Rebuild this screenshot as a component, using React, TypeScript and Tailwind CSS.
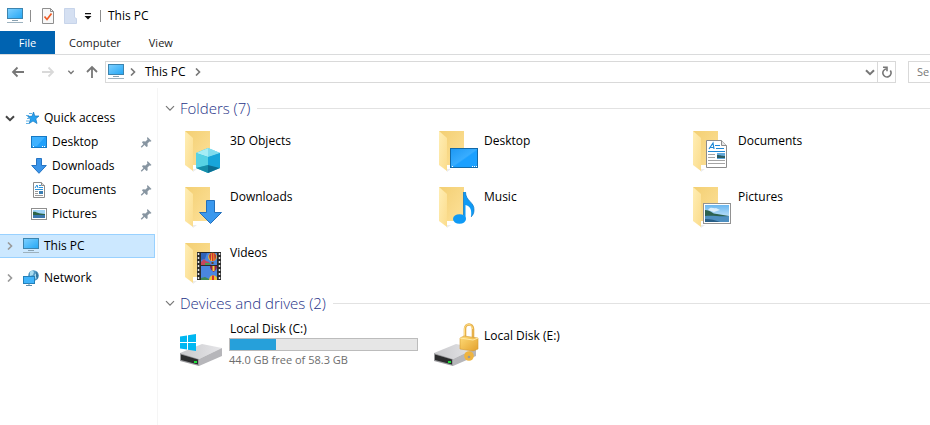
import React from 'react';

type IconProps = { className?: string };

const MonitorIcon: React.FC<IconProps> = ({ className = 'h-4 w-4' }) => (
  <svg viewBox="0 0 16 16" className={className} aria-hidden="true">
    <defs>
      <linearGradient id="screen" x1="0" y1="0" x2="1" y2="1">
        <stop offset="0" stopColor="#7fd0ff" />
        <stop offset="1" stopColor="#23a7f5" />
      </linearGradient>
    </defs>
    <rect x="0.5" y="0.5" width="15" height="10" fill="url(#screen)" stroke="#3d84ae" />
    <rect x="5" y="12" width="6" height="1" fill="#8aa2b1" />
    <rect x="0" y="14" width="16" height="1" fill="#9db2bf" />
  </svg>
);

const ChevronRight: React.FC<IconProps & { color?: string }> = ({ className = 'h-2 w-2', color = '#8a8a8a' }) => (
  <svg viewBox="0 0 8 8" className={className} fill="none" stroke={color} strokeWidth="1.6" aria-hidden="true">
    <path d="M2 0.5 5.5 4 2 7.5" />
  </svg>
);

const ChevronDown: React.FC<IconProps & { color?: string; weight?: number }> = ({
  className = 'h-3 w-3',
  color = '#444',
  weight = 2,
}) => (
  <svg viewBox="0 0 12 12" className={className} fill="none" stroke={color} strokeWidth={weight} aria-hidden="true">
    <path d="M2 4.200 6 8.200 10 4.200" />
  </svg>
);

const ArrowIcon: React.FC<IconProps & { color: string; d: string }> = ({ className = 'h-4 w-4', color, d }) => (
  <svg viewBox="0 0 16 16" className={className} fill="none" stroke={color} strokeWidth="1.8" aria-hidden="true">
    <path d={d} />
  </svg>
);

const StarIcon = () => (
  <svg viewBox="0 0 16 16" className="h-4 w-4" aria-hidden="true">
    <path d="M9.5 2 10.800 6h4.200l-3.200 2.800L13 13.500 9 11 5.200 13.500 6.400 9 3.600 6.300H8z" fill="#27a1f0" stroke="#1678c0" strokeWidth="0.7" />
    <path d="M5 3.5h3M2 5.500h3M3 8.5h2.500M2 11h3M2 13.500h3" stroke="#63b3e6" />
  </svg>
);

const SmallDesktopIcon = () => (
  <svg viewBox="0 0 16 16" className="h-4 w-4" aria-hidden="true">
    <rect x="0.5" y="2.5" width="15" height="11" fill="#20a0fb" stroke="#1679c4" />
    <path d="M6 12 14 3H1v9z" fill="#3fb2ff" />
    <path d="M2 12.5h1M11 12.5h1M13 12.5h1" stroke="#fff" />
  </svg>
);

const SmallDownloadIcon = () => (
  <svg viewBox="0 0 16 16" className="h-4 w-4" aria-hidden="true">
    <path d="M5.5 0.5h5v7h4.8L8 15.3.7 7.5h4.8z" fill="#3b95ea" stroke="#2674c3" />
  </svg>
);

const SmallDocumentIcon = () => (
  <svg viewBox="0 0 16 16" className="h-4 w-4" aria-hidden="true">
    <path d="M2.5.5h8l3 3v12h-11z" fill="#fff" stroke="#8b8b8b" />
    <path d="M10.5.5v3h3" fill="#ddd" stroke="#8b8b8b" />
    <path d="m4 6 2-3 1 3M8 3.5h2M8 5.5h4M4 7.5h8" fill="none" stroke="#2a93dd" />
    <path d="M4 9.5h3M4 11.5h3M4 13.5h8" stroke="#999" />
    <path d="M8 9h4v3H8z" fill="#3c7fb3" />
  </svg>
);

const SmallPictureIcon = () => (
  <svg viewBox="0 0 16 16" className="h-4 w-4" aria-hidden="true">
    <rect x="0.5" y="2.5" width="15" height="11" fill="#fff" stroke="#8f8f8f" />
    <path d="M2 4h12v8H2z" fill="#9fd3f7" />
    <path d="M2 6c3-1 4 2 12 2v2H2z" fill="#2d6448" />
    <path d="M2 9h12v3H2z" fill="#3a76ad" />
  </svg>
);

const NetworkIcon = () => (
  <svg viewBox="0 0 16 16" className="h-4 w-4" aria-hidden="true">
    <circle cx="10.5" cy="5.5" r="5.3" fill="#5199c4" />
    <path d="M7 2c2-2 3-1 4 0l-1 3-3 1zM12 4l3-1 .5 4-3 2-1-3z" fill="#a9dcf0" />
    <path d="M13 1.500a5.300 5.300 0 0 1 1 8l-1-3z" fill="#35759f" />
    <rect x="0.5" y="6.500" width="11" height="7" fill="#41b4fa" stroke="#2380b9" />
    <path d="M6 13.500v1.500M3 15.500h6" stroke="#5c8cab" />
  </svg>
);

const PinIcon = () => (
  <svg viewBox="0 0 12 12" className="h-3 w-3" aria-hidden="true">
    <path d="m7.500 1 4 4-1.200.8-.8-.3-2 2 .2 2.700-1.200.8L2 6.500l.8-1.200 2.700.2 2-2-.500-1.300z" fill="#8795a1" />
    <path d="M4.500 8 1.200 11.200" stroke="#8795a1" strokeWidth="1.300" />
  </svg>
);

// Open folder that every library icon sits on
const Folder: React.FC<{ children: React.ReactNode }> = ({ children }) => (
  <svg viewBox="0 0 48 48" className="h-12 w-12 shrink-0" aria-hidden="true">
    <defs>
      <linearGradient id="folderBack" x1="0" y1="0" x2="1" y2="1">
        <stop offset="0" stopColor="#f3cf73" />
        <stop offset="1" stopColor="#fde199" />
      </linearGradient>
      <linearGradient id="folderFlap" x1="0" y1="0" x2="1" y2="1">
        <stop offset="0" stopColor="#ffeeb5" />
        <stop offset="1" stopColor="#fbdc8c" />
      </linearGradient>
      <linearGradient id="blue" x1="0" y1="0" x2="1" y2="1">
        <stop offset="0" stopColor="#1c97f3" />
        <stop offset="0.5" stopColor="#38adff" />
        <stop offset="0.55" stopColor="#1ba0ff" />
        <stop offset="1" stopColor="#1ba0ff" />
      </linearGradient>
      <linearGradient id="sky" x1="0" y1="0" x2="0" y2="1">
        <stop offset="0" stopColor="#6bb7f0" />
        <stop offset="1" stopColor="#dff2fb" />
      </linearGradient>
    </defs>
    <path d="M12 43h5l-4 3z" fill="#ececec" />
    <path d="M5 5h25v34H12z" fill="url(#folderBack)" />
    <path d="M5 5l8 7v33l-8-6z" fill="url(#folderFlap)" />
    {children}
  </svg>
);

const CubeIcon = () => (
  <Folder>
    <path d="m16 27 12-5 12 5v15l-12 5-12-5z" fill="#2bb9d8" />
    <path d="m16 27 12-5 12 5-12 4z" fill="#a5edf5" />
    <path d="m28 22 12 5-12 4z" fill="#7fdcee" />
    <path d="m16 27 12 4v8l-12 3z" fill="#57d2e4" />
    <path d="m16 42 12-3v8z" fill="#168da8" />
    <path d="m28 31 12-4v15l-12-3z" fill="#17a5da" />
    <path d="m28 39 12 3-12 5z" fill="#0b6e93" />
  </Folder>
);

const DesktopIcon = () => (
  <Folder>
    <rect x="16.500" y="22.500" width="27" height="19" fill="url(#blue)" stroke="#1269a8" />
    <path d="M18 40.500h1M38 40.500h1M40 40.500h1M42 40.500h1" stroke="#fff" />
  </Folder>
);

const DocumentsIcon = () => (
  <Folder>
    <path d="M18.500 14.500h15l5 5v22h-20z" fill="#fff" stroke="#8c8c8c" />
    <path d="M33.500 14.500v5h5" fill="#e5e5e5" stroke="#8c8c8c" />
    <path d="m21 23 4-6 1 6M22 21.500h4M27 19.500h5M28 22.500h8M20 25.500h17" fill="none" stroke="#1e88d6" strokeWidth="1.200" />
    <path d="M20 28.500h7M20 31.500h7M20 34.500h17M20 37.500h17" stroke="#a5a5a5" />
    <path d="M29 27h8v6h-8z" fill="#64a9db" />
    <path d="M29 29c4 0 4 1 8 1v2h-8z" fill="#2c5d63" />
  </Folder>
);

const DownloadsIcon = () => (
  <Folder>
    <path d="M26.500 18.500h8v12h7L30.500 41.500 19.500 30.500h7z" fill="#3a98ee" stroke="#2470bb" />
  </Folder>
);

const MusicIcon = () => (
  <Folder>
    <ellipse cx="25.500" cy="37" rx="6.500" ry="4.800" fill="#0f9af5" />
    <path d="M29.500 10h2c0 9 9 10 8.500 18 0 3-1 5-3 7 1-8-1-11-5.500-12V37h-2z" fill="#0f9af5" />
    <path d="M31.500 10c0 9 9 10 8.500 18 0 3-1 5-3 7M29.500 10v23" fill="none" stroke="#0873c2" strokeWidth="0.7" />
  </Folder>
);

const PicturesIcon = () => (
  <Folder>
    <rect x="15.500" y="21.500" width="27" height="20" fill="#fff" stroke="#929292" />
    <path d="M17 23h24v17H17z" fill="url(#sky)" />
    <path d="M20 28c3-4 5-1 8-2l4 2-6 2z" fill="#fff" opacity="0.7" />
    <path d="M17 28c6 0 7 4 12 4l12 2v2H17z" fill="#2d6250" />
    <path d="M17 34c8-1 14 1 24 0v6H17z" fill="#4e8fc0" />
    <path d="M17 40v-3c6 0 10 1 15 3z" fill="#285e86" />
  </Folder>
);

const VideosIcon = () => (
  <Folder>
    <path d="M17 14h24v28H17z" fill="#2b2b2b" />
    <path d="M18.500 15v27M39.500 15v27" stroke="#e8e8e8" strokeWidth="1.500" strokeDasharray="2 2" />
    <path d="M21 15h16v12H21zM21 28h16v14H21z" fill="#4a86de" />
    <path d="M21 15h6l-2 6-4 1z" fill="#2f63b8" />
    <path d="M21 24l3-3 2 2 3 1 2 3H21z" fill="#c4475c" />
    <path d="M25 25h5v2h-5z" fill="#4a9a58" />
    <circle cx="32.500" cy="19" r="4.300" fill="#f0c12d" />
    <path d="M32 15h1.500v8H32z" fill="#d9302e" />
    <path d="M29 17.500c1-2 2-2.500 2.500-2.500l-.5 8c-1-1-2-3-2-5.500zM36 17.500c-.5-1.500-1.500-2.500-2-2.500l.5 8c1-1 1.700-3 1.500-5.500z" fill="#b53a3a" />
    <path d="M31.500 24h2v2h-2z" fill="#6d3d1e" />
    <path d="M30 28h7c0 3-1 4-3.500 6-2-2-3.500-3-3.500-6z" fill="#8f2450" />
    <path d="M32.500 28h2v5h-2z" fill="#f4cf3a" />
    <path d="M21 40l4-1 4 2v1h-8z" fill="#3f8a55" />
    <path d="M29 42c0-6 7-6 8-2v2z" fill="#eec131" />
    <path d="M32 37.500h2V42h-2z" fill="#d9302e" />
  </Folder>
);

const DriveBody = () => (
  <>
    <defs>
      <linearGradient id="driveTop" x1="0" y1="0" x2="1" y2="0">
        <stop offset="0" stopColor="#c9c9cc" />
        <stop offset="1" stopColor="#e6e6e9" />
      </linearGradient>
    </defs>
    <path d="M0 32 22 23 42 27 19 38z" fill="url(#driveTop)" />
    <path d="M19 38 42 27v8L19 45z" fill="#b6b6ba" />
    <path d="M0 32l19 6v7L0 40z" fill="#9b9b9e" />
    <path d="m1 33.500 17 5v5L1 39z" fill="#2c2d2e" />
    <path d="M14 40h3v2h-3z" fill="#1ee03a" />
  </>
);

const SystemDriveIcon = () => (
  <svg viewBox="0 0 48 48" className="h-12 w-12 shrink-0" aria-hidden="true">
    <DriveBody />
    <path d="m0 15.500 7-1V21H0zM8 14.300l8-1.300v8H8zM0 22h7v6.500l-7-1zM8 22h8v8l-8-1.300z" fill="#00b7f1" />
  </svg>
);

const LockedDriveIcon = () => (
  <svg viewBox="0 0 48 48" className="h-12 w-12 shrink-0" aria-hidden="true">
    <defs>
      <linearGradient id="gold" x1="0" y1="0" x2="1" y2="1">
        <stop offset="0" stopColor="#ffdc78" />
        <stop offset="1" stopColor="#e3a02c" />
      </linearGradient>
    </defs>
    <DriveBody />
    <path d="M31 17V8c0-6 8-6 8 0v9" fill="none" stroke="#e6b04a" strokeWidth="2.600" />
    <path d="M30.500 17V8c0-6 8-6 8 0" fill="none" stroke="#ffdf88" strokeWidth="1" />
    <circle cx="35" cy="35" r="4.800" fill="#efb440" />
    <path d="m26 17 4-2 14 2v11l-5 2-13-2z" fill="url(#gold)" stroke="#d39a33" strokeWidth="0.6" />
    <path d="m26 17 13 2 5-2" fill="none" stroke="#ffe9a6" />
    <circle cx="35" cy="36" r="1.300" fill="#9a9a9a" />
  </svg>
);

const quickAccess = [
  { name: 'Desktop', icon: <SmallDesktopIcon /> },
  { name: 'Downloads', icon: <SmallDownloadIcon /> },
  { name: 'Documents', icon: <SmallDocumentIcon /> },
  { name: 'Pictures', icon: <SmallPictureIcon /> },
];

const folders = [
  { name: '3D Objects', icon: <CubeIcon /> },
  { name: 'Desktop', icon: <DesktopIcon /> },
  { name: 'Documents', icon: <DocumentsIcon /> },
  { name: 'Downloads', icon: <DownloadsIcon /> },
  { name: 'Music', icon: <MusicIcon /> },
  { name: 'Pictures', icon: <PicturesIcon /> },
  { name: 'Videos', icon: <VideosIcon /> },
];

const totalGb = 58.3;
const freeGb = 44;

const TitleBar = () => (
  <header className="flex h-[31px] items-center pl-[7px]">
    <MonitorIcon />
    <span className="ml-[7px] h-3 w-px bg-[#8d8d8d]" />
    <button aria-label="Properties" className="ml-[11px]">
      <svg viewBox="0 0 12 16" className="h-4 w-3">
        <path d="M.5.5h8l3 3v12H.5z" fill="#f8f8f8" stroke="#8f8f8f" />
        <path d="M8.500.5v3h3" fill="none" stroke="#8f8f8f" />
        <path d="m2.500 8.500 2.500 3 4.500-6" fill="none" stroke="#ee5a24" strokeWidth="1.700" />
      </svg>
    </button>
    <button aria-label="New folder" className="ml-2.5">
      <svg viewBox="0 0 13 16" className="h-4 w-[13px]">
        <path d="M.5.5h10v9l2 1v5H.5z" fill="#d5e0f2" stroke="#c7d4ea" />
      </svg>
    </button>
    <button aria-label="Customize Quick Access Toolbar" className="ml-[7px]">
      <svg viewBox="0 0 8 8" className="h-2 w-2">
        <path d="M1 1h6v1.300H1zM.5 4h7L4 7.500z" fill="#111" />
      </svg>
    </button>
    <span className="ml-2 h-3 w-px bg-[#8d8d8d]" />
    <h1 className="ml-[7px]">This PC</h1>
  </header>
);

const AddressBar = () => (
  <div className="flex h-[33px] items-center pl-2.5">
    <button aria-label="Back">
      <ArrowIcon color="#777" d="M14 8H3M7.500 3.500 3 8l4.500 4.500" />
    </button>
    <button aria-label="Forward" className="ml-3.5" disabled>
      <ArrowIcon color="#d9d9d9" d="M2 8h11M8.500 3.500 13 8l-4.500 4.500" />
    </button>
    <button aria-label="Recent locations" className="ml-[11px]">
      <ChevronDown className="h-2 w-2" color="#777" />
    </button>
    <button aria-label="Up" className="ml-[9px]">
      <ArrowIcon color="#777" d="M8 14V3M3 8l5-5 5 5" />
    </button>
    <div className="ml-[5px] flex h-[22px] flex-1 items-center border border-[#d9d9d9] pl-0.5">
      <MonitorIcon />
      <ChevronRight className="ml-[5px] h-2 w-2" color="#777" />
      <a href="#this-pc" className="ml-2">This PC</a>
      <ChevronRight className="ml-2 h-2 w-2" color="#777" />
      <button aria-label="Previous locations" className="mr-px ml-auto">
        <ChevronDown color="#777" />
      </button>
      <button aria-label="Refresh" className="flex h-full w-[18px] items-center justify-center border-l border-[#d9d9d9]">
        <svg viewBox="0 0 12 12" className="h-3 w-3" fill="none" stroke="#777" strokeWidth="1.600">
          <path d="M9.300 4.500A4.100 4.100 0 1 1 5.500 2.800" />
          <path d="M2 1.300h4v4" />
        </svg>
      </button>
    </div>
    <input
      type="text"
      aria-label="Search This PC"
      placeholder="Se"
      className="ml-3 h-[22px] w-[22px] rounded-none border border-r-0 border-[#d9d9d9] pl-2 text-[11px] outline-none placeholder:text-[#777]"
    />
  </div>
);

const Sidebar = () => (
  <nav className="w-[158px] shrink-0 border-r border-[#f5f5f5] pt-[18px] pr-[2px]">
    <a href="#quick-access" className="flex h-6 items-center pl-1">
      <ChevronDown />
      <span className="ml-2">
        <StarIcon />
      </span>
      <span className="ml-1">Quick access</span>
    </a>
    {quickAccess.map((item) => (
      <a key={item.name} href={`#${item.name}`} className="flex h-6 items-center pr-[3px] pl-[31px]">
        {item.icon}
        <span className="ml-[5px] flex-1">{item.name}</span>
        <PinIcon />
      </a>
    ))}
    <a href="#this-pc" className="mt-2 flex h-6 items-center border border-l-0 border-[#99d1ff] bg-[#cce8ff] pl-[6px]">
      <ChevronRight color="#999" />
      <MonitorIcon className="ml-[9px] h-4 w-4" />
      <span className="ml-[5px]">This PC</span>
    </a>
    <a href="#network" className="mt-2 flex h-6 items-center pl-[6px]">
      <ChevronRight color="#999" />
      <span className="ml-[9px]">
        <NetworkIcon />
      </span>
      <span className="ml-[5px]">Network</span>
    </a>
  </nav>
);

const SectionHeading: React.FC<{ children: React.ReactNode }> = ({ children }) => (
  <div className="mb-2 flex h-5 items-center pl-1.5">
    <ChevronDown color="#777" weight={1.2} />
    <h2 className="ml-1 text-[15px] leading-5 font-light text-[#1e3287]">{children}</h2>
    <span className="ml-[7px] h-px flex-1 bg-[#e2e2e2]" />
  </div>
);

const App: React.FC = () => {
  return (
    <div className="flex min-h-screen flex-col overflow-hidden bg-white font-['Open_Sans',sans-serif] text-[12px] leading-4 text-black">
      <TitleBar />
      <div className="flex h-6 border-b border-[#dadbdc] text-[11px] text-[#222]">
        <button className="w-[55px] bg-[#0063b1] text-white">File</button>
        <button className="px-3.5">Computer</button>
        <button className="px-3.5">View</button>
      </div>
      <AddressBar />

      <div className="flex flex-1">
        <Sidebar />
        <main className="min-w-0 flex-1 pt-2.5">
          <SectionHeading>Folders (7)</SectionHeading>
          <ul className="grid grid-cols-[repeat(auto-fill,240px)] gap-x-3.5 gap-y-2 pl-[22px]">
            {folders.map((folder) => (
              <li key={folder.name}>
                <a href={`#${folder.name}`} className="flex h-12 gap-0.5">
                  {folder.icon}
                  <span className="mt-[7px]">{folder.name}</span>
                </a>
              </li>
            ))}
          </ul>

          <div className="mt-[7px]">
            <SectionHeading>Devices and drives (2)</SectionHeading>
          </div>
          <ul className="grid grid-cols-[repeat(auto-fill,240px)] gap-x-3.5 gap-y-2 pl-[22px]">
            <li>
              <a href="#c" className="flex gap-px">
                <SystemDriveIcon />
                <div className="flex-1 pr-0.5">
                  <p className="pl-px">Local Disk (C:)</p>
                  <div className="mt-px h-[13px] border border-[#bcbcbc] bg-[#e6e6e6]">
                    <div
                      className="h-full bg-[#26a0da]"
                      style={{ width: `${((totalGb - freeGb) / totalGb) * 100}%` }}
                    />
                  </div>
                  <p className="mt-px text-[11px] leading-4 text-[#6d6d6d]">44.0 GB free of 58.3 GB</p>
                </div>
              </a>
            </li>
            <li>
              <a href="#e" className="flex gap-0.5">
                <LockedDriveIcon />
                <span className="mt-[7px]">Local Disk (E:)</span>
              </a>
            </li>
          </ul>
        </main>
      </div>
    </div>
  );
};

export default App;
